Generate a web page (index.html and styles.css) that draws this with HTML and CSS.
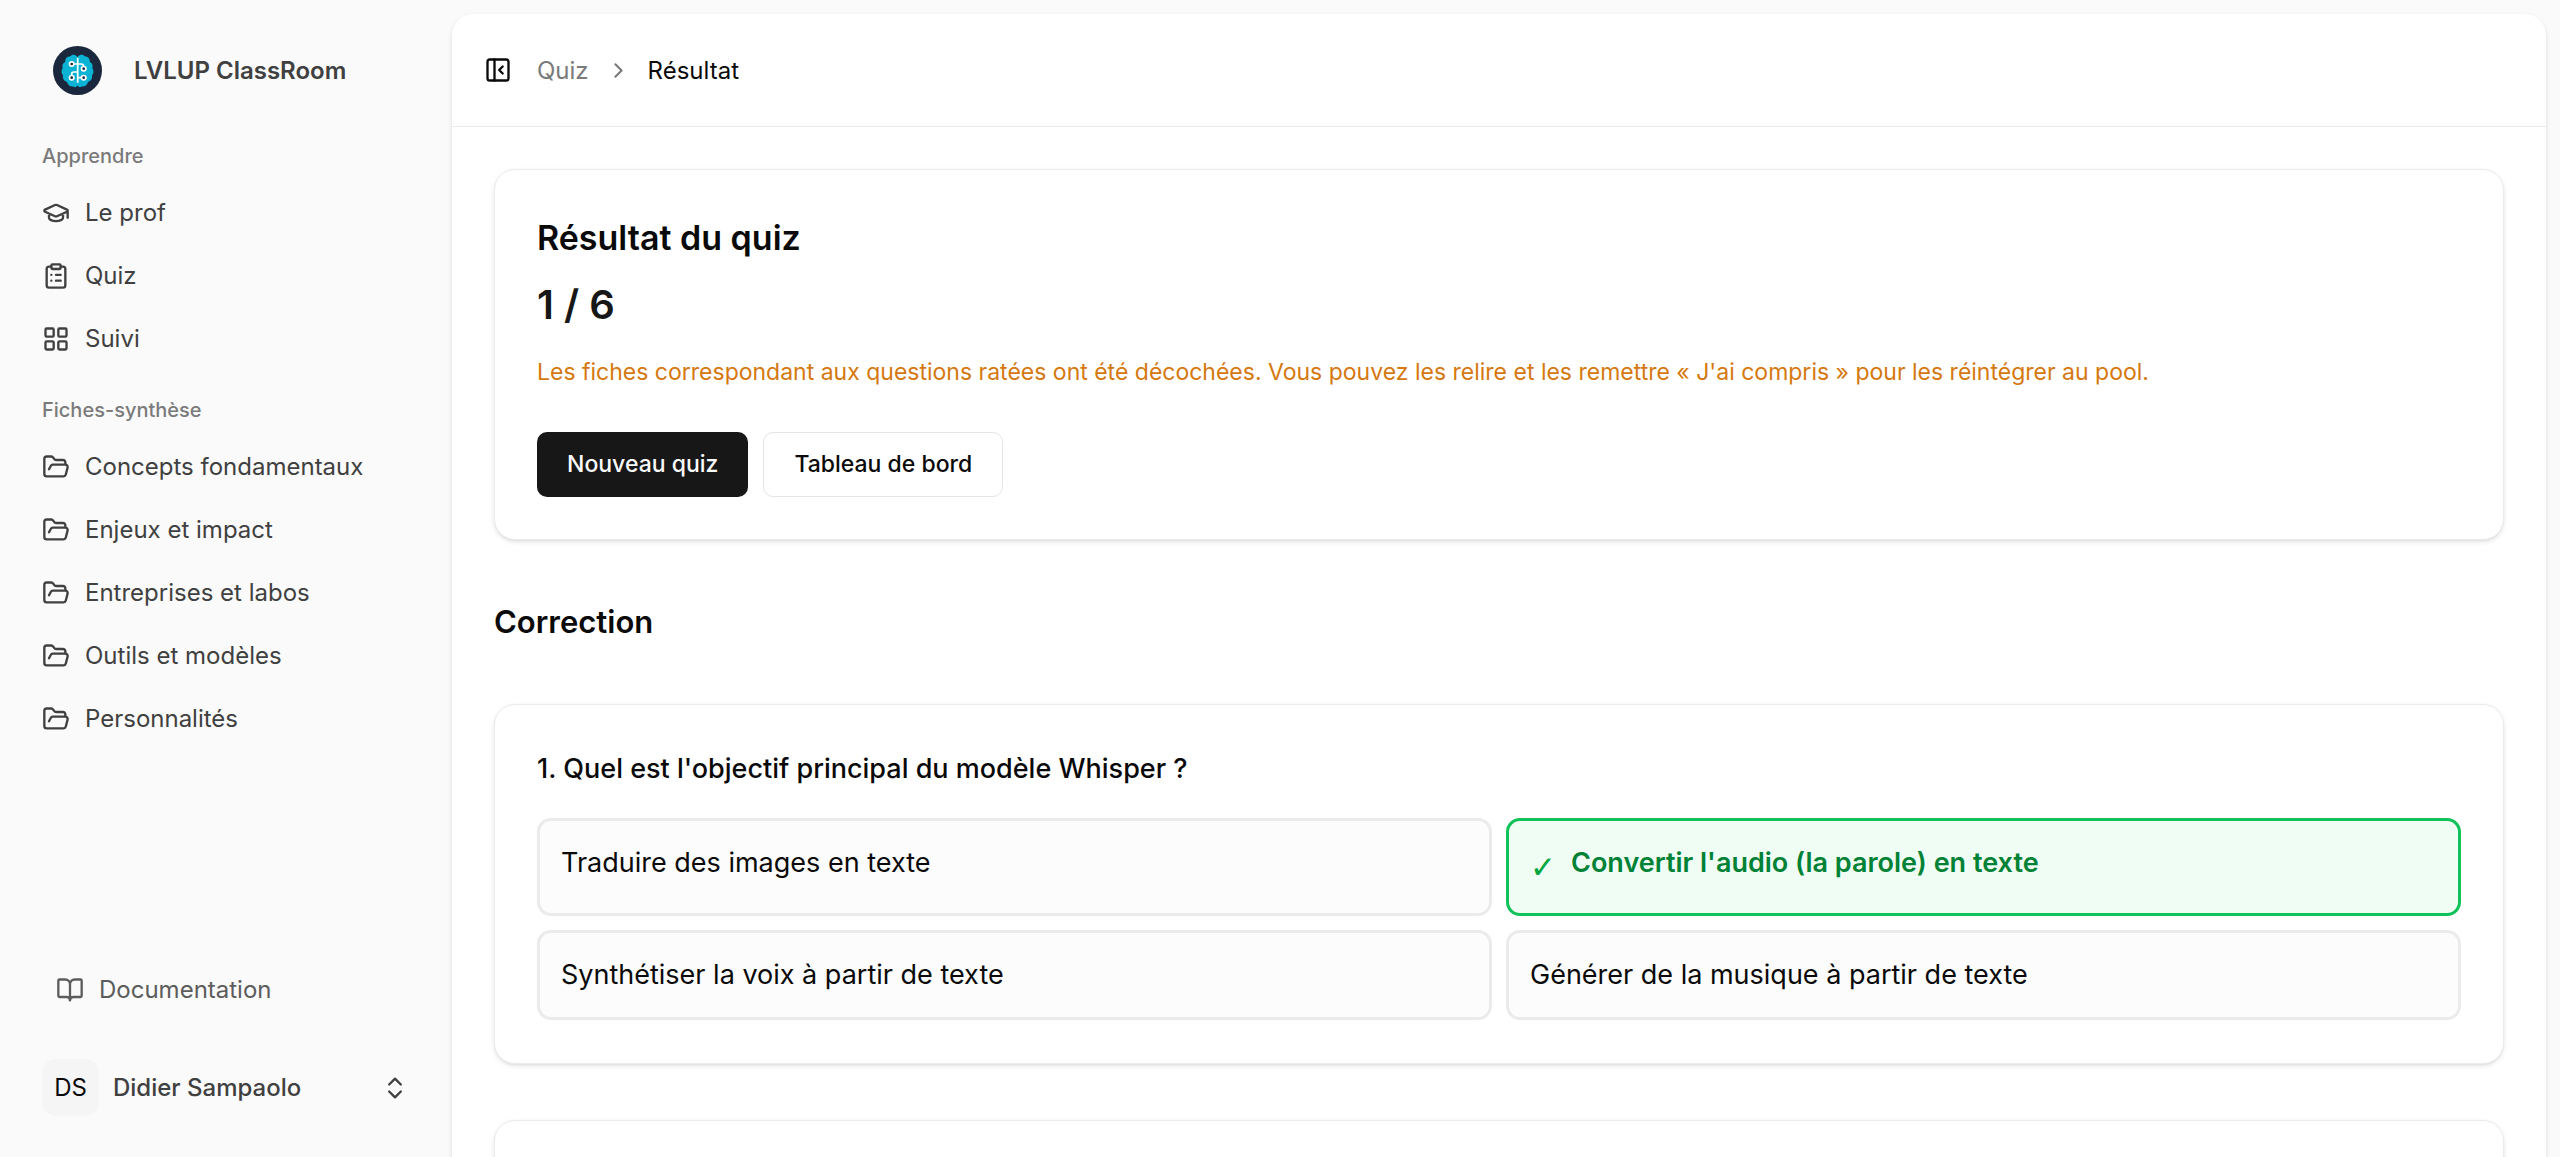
FILE: index.html
```
<!DOCTYPE html>
<html lang="fr">
<head>
<meta charset="utf-8">
<meta name="viewport" content="width=device-width, initial-scale=1">
<title>Résultat – LVLUP ClassRoom</title>
<link rel="stylesheet" href="styles.css">
</head>
<body>
<svg class="sprite" aria-hidden="true">
  <symbol id="folder" viewBox="0 0 24 24"><path d="m6 14 1.5-2.9A2 2 0 0 1 9.24 10H20a2 2 0 0 1 1.94 2.5l-1.54 6a2 2 0 0 1-1.95 1.5H4a2 2 0 0 1-2-2V5a2 2 0 0 1 2-2h3.9a2 2 0 0 1 1.69.9l.81 1.2a2 2 0 0 0 1.67.9H18a2 2 0 0 1 2 2v2"/></symbol>
</svg>
<div class="layout">
  <aside class="sidebar">
    <a class="brand" href="#">
      <svg class="logo" viewBox="0 0 49 49" aria-hidden="true">
        <circle cx="24.500" cy="24.500" r="24.500" fill="#1b273d"/>
        <path fill="#0ab3d3" d="M24.500 11.500C23.500 8.500 19.500 8 17.500 10.200c-3.800 0-5.600 2.800-5.200 5.500-2.600 1.300-3.500 4-2.600 6.300-1.800 2.500-1.500 5.500.3 7.200-.6 3.200 1 6 4 6.700.8 3.200 3.500 5 6.200 4.600 2 1.300 3.600.4 4.300-.9.700 1.300 2.300 2.200 4.300.9 2.700.4 5.400-1.400 6.200-4.600 3-.7 4.600-3.500 4-6.700 1.800-1.700 2.100-4.700.3-7.200.9-2.300 0-5-2.600-6.300.4-2.700-1.400-5.500-5.200-5.500-2-2.200-6-1.700-7 1.300z"/>
        <g fill="none" stroke="#fff" stroke-width="1.700">
          <path d="M24.700 11.700v25M21 18h7a2.700 2.700 0 0 1 2.700 2.500M18.700 29.500V28a2 2 0 0 1 2-2h4M24.700 31.700h3.500"/>
          <g fill="#1b273d"><circle cx="18.700" cy="18" r="2.200"/><circle cx="30.700" cy="22.700" r="2.200"/><circle cx="18.700" cy="31.700" r="2.200"/><circle cx="30.700" cy="31.700" r="2.200"/></g>
        </g>
      </svg>
      <span>LVLUP ClassRoom</span>
    </a>

    <nav class="nav">
      <section class="group">
        <h2 class="group-label">Apprendre</h2>
        <a class="item" href="#"><svg class="icon" viewBox="0 0 24 24"><path d="M21.420 10.922a1 1 0 0 0-.019-1.838L12.830 5.180a2 2 0 0 0-1.660 0L2.600 9.080a1 1 0 0 0 0 1.832l8.570 3.908a2 2 0 0 0 1.660 0zM22 10v6M6 12.500V16a6 3 0 0 0 12 0v-3.500"/></svg>Le prof</a>
        <a class="item" href="#"><svg class="icon" viewBox="0 0 24 24"><rect width="8" height="4" x="8" y="2" rx="1"/><path d="M16 4h2a2 2 0 0 1 2 2v14a2 2 0 0 1-2 2H6a2 2 0 0 1-2-2V6a2 2 0 0 1 2-2h2M12 11h4M12 16h4M8 11h.01M8 16h.01"/></svg>Quiz</a>
        <a class="item" href="#"><svg class="icon" viewBox="0 0 24 24"><rect width="7" height="7" x="3" y="3" rx="1"/><rect width="7" height="7" x="14" y="3" rx="1"/><rect width="7" height="7" x="14" y="14" rx="1"/><rect width="7" height="7" x="3" y="14" rx="1"/></svg>Suivi</a>
      </section>
      <section class="group">
        <h2 class="group-label">Fiches-synthèse</h2>
        <a class="item" href="#"><svg class="icon"><use href="#folder"/></svg>Concepts fondamentaux</a>
        <a class="item" href="#"><svg class="icon"><use href="#folder"/></svg>Enjeux et impact</a>
        <a class="item" href="#"><svg class="icon"><use href="#folder"/></svg>Entreprises et labos</a>
        <a class="item" href="#"><svg class="icon"><use href="#folder"/></svg>Outils et modèles</a>
        <a class="item" href="#"><svg class="icon"><use href="#folder"/></svg>Personnalités</a>
      </section>
    </nav>

    <div class="sidebar-footer">
      <a class="item item-muted" href="#"><svg class="icon" viewBox="0 0 24 24"><path d="M12 7v14M3 18a1 1 0 0 1-1-1V4a1 1 0 0 1 1-1h5a4 4 0 0 1 4 4 4 4 0 0 1 4-4h5a1 1 0 0 1 1 1v13a1 1 0 0 1-1 1h-6a3 3 0 0 0-3 3 3 3 0 0 0-3-3z"/></svg>Documentation</a>
      <button class="user" type="button">
        <span class="avatar">DS</span>
        <span class="user-name">Didier Sampaolo</span>
        <svg class="icon" viewBox="0 0 24 24"><path d="m7 15 5 5 5-5M7 9l5-5 5 5"/></svg>
      </button>
    </div>
  </aside>

  <main class="main">
    <header class="topbar">
      <button class="toggle" type="button" aria-label="Replier le menu"><svg class="icon" viewBox="0 0 24 24"><rect width="18" height="18" x="3" y="3" rx="2"/><path d="M9 3v18M16 15l-3-3 3-3"/></svg></button>
      <nav class="crumbs">
        <a class="crumb" href="#">Quiz</a>
        <svg class="chevron" viewBox="0 0 24 24"><path d="m9 18 6-6-6-6"/></svg>
        <span>Résultat</span>
      </nav>
    </header>

    <div class="content">
      <section class="card">
        <h1 class="title">Résultat du quiz</h1>
        <p class="score">1 / 6</p>
        <p class="notice">Les fiches correspondant aux questions ratées ont été décochées. Vous pouvez les relire et les remettre «&nbsp;J'ai compris&nbsp;» pour les réintégrer au pool.</p>
        <div class="actions">
          <button class="btn btn-primary" type="button">Nouveau quiz</button>
          <button class="btn btn-outline" type="button">Tableau de bord</button>
        </div>
      </section>

      <h2 class="section-title">Correction</h2>

      <section class="card">
        <h3 class="question">1. Quel est l'objectif principal du modèle Whisper ?</h3>
        <ul class="options">
          <li class="option">Traduire des images en texte</li>
          <li class="option option-correct"><span class="check">✓</span>Convertir l'audio (la parole) en texte</li>
          <li class="option">Synthétiser la voix à partir de texte</li>
          <li class="option">Générer de la musique à partir de texte</li>
        </ul>
      </section>

      <section class="card"></section>
    </div>
  </main>
</div>
</body>
</html>
```
FILE: styles.css
```
* { box-sizing: border-box; margin: 0; padding: 0; }

html { scrollbar-width: none; }

body {
  background: #fafafa;
  color: #0a0a0a;
  font: 400 24px/35px Inter, "Liberation Sans", sans-serif;
}

a { color: inherit; text-decoration: none; }
button { font: inherit; color: inherit; background: none; border: 0; cursor: pointer; }
ul { list-style: none; }
.sprite { display: none; }

.icon, .chevron {
  flex: none;
  width: 28px;
  height: 28px;
  fill: none;
  stroke: currentColor;
  stroke-width: 2;
  stroke-linecap: round;
  stroke-linejoin: round;
}

.layout { display: flex; align-items: flex-start; min-height: 100vh; }

/* Sidebar */
.sidebar {
  position: sticky;
  top: 0;
  flex: none;
  display: flex;
  flex-direction: column;
  width: 452px;
  height: 100vh;
  padding: 14px 28px 27px;
  color: #404040;
}

.brand {
  display: flex;
  align-items: center;
  gap: 32px;
  height: 112px;
  margin-bottom: 2px;
  padding-left: 25px;
  font-weight: 600;
}
.logo { width: 49px; height: 49px; }

.nav { flex: 1; display: flex; flex-direction: column; gap: 15px; }

.group-label {
  padding: 0 14px;
  color: #7a7a7a;
  font-size: 20px;
  font-weight: 500;
  line-height: 56px;
}

.item {
  display: flex;
  align-items: center;
  gap: 15px;
  height: 57px;
  padding: 0 14px;
}
.item + .item { margin-top: 6px; }
.item-muted { padding-left: 28px; color: #5c5c5c; }

.sidebar-footer { display: flex; flex-direction: column; gap: 27px; }

.user {
  display: flex;
  align-items: center;
  gap: 14px;
  height: 85px;
  padding: 0 15px 0 14px;
  font-weight: 500;
  text-align: left;
}
.user-name { flex: 1; }

.avatar {
  display: grid;
  place-items: center;
  width: 57px;
  height: 57px;
  border-radius: 14px;
  background: #f5f5f5;
  color: #0a0a0a;
  font-weight: 400;
}

/* Main panel */
.main {
  flex: 1;
  min-width: 0;
  min-height: calc(100vh - 28px);
  margin: 14px 14px 14px 0;
  border-radius: 21px;
  background: #fff;
  box-shadow: 0 2px 5px rgb(0 0 0 / 10%), 0 2px 4px -2px rgb(0 0 0 / 10%);
}

.topbar {
  display: flex;
  align-items: center;
  gap: 25px;
  height: 113px;
  padding: 0 32px;
  border-bottom: 1px solid #ebebeb;
}
.toggle { display: flex; }

.crumbs { display: flex; align-items: center; gap: 17px; }
.crumb { color: #7a7a7a; }
.chevron { width: 25px; height: 25px; color: #7a7a7a; }

.content {
  display: flex;
  flex-direction: column;
  gap: 56px;
  padding: 42px;
}

.card {
  min-height: 360px;
  padding: 42px;
  border: 1px solid #ebebeb;
  border-radius: 21px;
  background: #fff;
  box-shadow: 0 2px 5px rgb(0 0 0 / 10%), 0 2px 3px -2px rgb(0 0 0 / 10%);
}

.title { font-size: 34px; font-weight: 600; line-height: 52px; }
.score { margin-top: 16px; font-size: 40px; font-weight: 600; line-height: 50px; color: #171717; }
.notice { margin-top: 25px; font-size: 23px; line-height: 35px; color: #d5780f; }

.actions { display: flex; gap: 15px; margin-top: 42px; }
.btn { height: 65px; padding: 0 30px; border-radius: 10px; font-size: 23px; font-weight: 500; }
.btn-primary { background: #171717; color: #fafafa; }
.btn-outline { border: 1px solid #e5e5e5; background: #fff; }

.section-title { font-size: 31px; font-weight: 600; line-height: 52px; }

.question { font-size: 27px; font-weight: 500; line-height: 43px; }

.options {
  display: grid;
  grid-template-columns: 1fr 1fr;
  gap: 14px;
  margin-top: 28px;
}

.option {
  display: flex;
  align-items: flex-start;
  gap: 14px;
  padding: 21px;
  border: 3px solid #ebebeb;
  border-radius: 14px;
  background: #fcfcfc;
  font-size: 27px;
  line-height: 42px;
}
.option-correct {
  border-color: #0fc25a;
  background: #f0fdf4;
  color: #008236;
  font-weight: 600;
}
.check {
  width: 27px;
  color: #00a63e;
  font-family: "DejaVu Sans", sans-serif;
  font-size: 31px;
  font-weight: 400;
  line-height: 50px;
}
```
